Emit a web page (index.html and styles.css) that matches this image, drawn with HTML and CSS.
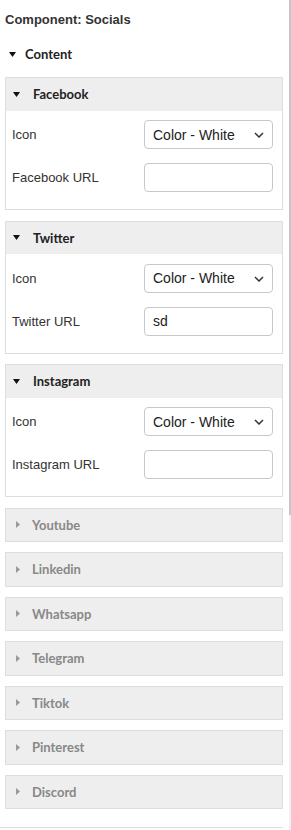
FILE: index.html
```html
<!doctype html>
<html>
  <head>
    <meta charset="UTF-8" />
    <meta name="viewport" content="width=device-width, initial-scale=1.0" />
    <title>Component: Socials</title>
    <link rel="stylesheet" href="styles.css">
  </head>
  <body>
    <div class="editor">
      <div class="editor-title">Component: Socials</div>

      <div class="group-toggle">
        <svg class="caret" width="7" height="5" viewBox="0 0 7 5"><path d="M0 0h7L3.5 5z" fill="#111"/></svg>
        <span>Content</span>
      </div>

      <div class="panel">
        <div class="panel-head">
          <svg class="caret" width="7" height="5" viewBox="0 0 7 5"><path d="M0 0h7L3.5 5z" fill="#111"/></svg>
          <span>Facebook</span>
        </div>
        <div class="panel-body">
          <div class="field">
            <label>Icon</label>
            <div class="select-wrap">
              <select><option>Color - White</option></select>
              <svg class="chevron" width="10" height="6" viewBox="0 0 10 6"><path d="M1 1l4 4 4-4" fill="none" stroke="#333" stroke-width="1.5"/></svg>
            </div>
          </div>
          <div class="field">
            <label>Facebook URL</label>
            <input type="text" value="" />
          </div>
        </div>
      </div>

      <div class="panel">
        <div class="panel-head">
          <svg class="caret" width="7" height="5" viewBox="0 0 7 5"><path d="M0 0h7L3.5 5z" fill="#111"/></svg>
          <span>Twitter</span>
        </div>
        <div class="panel-body">
          <div class="field">
            <label>Icon</label>
            <div class="select-wrap">
              <select><option>Color - White</option></select>
              <svg class="chevron" width="10" height="6" viewBox="0 0 10 6"><path d="M1 1l4 4 4-4" fill="none" stroke="#333" stroke-width="1.5"/></svg>
            </div>
          </div>
          <div class="field">
            <label>Twitter URL</label>
            <input type="text" value="sd" />
          </div>
        </div>
      </div>

      <div class="panel">
        <div class="panel-head">
          <svg class="caret" width="7" height="5" viewBox="0 0 7 5"><path d="M0 0h7L3.5 5z" fill="#111"/></svg>
          <span>Instagram</span>
        </div>
        <div class="panel-body">
          <div class="field">
            <label>Icon</label>
            <div class="select-wrap">
              <select><option>Color - White</option></select>
              <svg class="chevron" width="10" height="6" viewBox="0 0 10 6"><path d="M1 1l4 4 4-4" fill="none" stroke="#333" stroke-width="1.5"/></svg>
            </div>
          </div>
          <div class="field">
            <label>Instagram URL</label>
            <input type="text" value="" />
          </div>
        </div>
      </div>

      <div class="panel collapsed"><div class="panel-head"><svg class="caret-right" width="4" height="7" viewBox="0 0 4 7"><path d="M0 0l4 3.5L0 7z" fill="#999"/></svg><span>Youtube</span></div></div>
      <div class="panel collapsed"><div class="panel-head"><svg class="caret-right" width="4" height="7" viewBox="0 0 4 7"><path d="M0 0l4 3.5L0 7z" fill="#999"/></svg><span>Linkedin</span></div></div>
      <div class="panel collapsed"><div class="panel-head"><svg class="caret-right" width="4" height="7" viewBox="0 0 4 7"><path d="M0 0l4 3.5L0 7z" fill="#999"/></svg><span>Whatsapp</span></div></div>
      <div class="panel collapsed"><div class="panel-head"><svg class="caret-right" width="4" height="7" viewBox="0 0 4 7"><path d="M0 0l4 3.5L0 7z" fill="#999"/></svg><span>Telegram</span></div></div>
      <div class="panel collapsed"><div class="panel-head"><svg class="caret-right" width="4" height="7" viewBox="0 0 4 7"><path d="M0 0l4 3.5L0 7z" fill="#999"/></svg><span>Tiktok</span></div></div>
      <div class="panel collapsed"><div class="panel-head"><svg class="caret-right" width="4" height="7" viewBox="0 0 4 7"><path d="M0 0l4 3.5L0 7z" fill="#999"/></svg><span>Pinterest</span></div></div>
      <div class="panel collapsed"><div class="panel-head"><svg class="caret-right" width="4" height="7" viewBox="0 0 4 7"><path d="M0 0l4 3.5L0 7z" fill="#999"/></svg><span>Discord</span></div></div>

      <div class="editor-footer"></div>
    </div>

    <div class="scroll-track"><div class="scroll-thumb"></div></div>
  </body>
</html>
```

FILE: styles.css
```css
body {
  margin: 0;
  background: #fff;
  font-family: "Liberation Sans", Arial, sans-serif;
  color: #333;
  overflow: hidden;
}

.editor {
  width: 283px;
}

.editor-title {
  padding: 12px 5px 0;
  font-size: 13px;
  line-height: 16px;
  font-weight: bold;
  color: #333;
}

.group-toggle {
  display: flex;
  align-items: center;
  margin: 18px 0 15px;
  padding-left: 9px;
  height: 16px;
  font-family: Lato, sans-serif;
  font-weight: bold;
  font-size: 13px;
  color: #222;
}

.group-toggle .caret {
  margin-right: 9px;
}

.panel {
  margin: 0 0 10.5px 5px;
  border: 1px solid #ddd;
  background: #fff;
}

.panel.collapsed {
  margin-bottom: 10px;
}

.panel-head {
  display: flex;
  align-items: center;
  height: 32.5px;
  padding-left: 7px;
  background: #eee;
  font-family: Lato, sans-serif;
  font-weight: bold;
  font-size: 13px;
  color: #222;
}

.panel-head .caret {
  margin-right: 13px;
}

.panel-head .caret-right {
  margin: 0 12px 0 3px;
}

.collapsed .panel-head {
  color: #888;
}

.panel-body {
  display: flex;
  flex-direction: column;
  gap: 14px;
  padding: 9.5px 9px 17px 6px;
}

.field {
  display: grid;
  grid-template-columns: 1fr 129px;
  align-items: center;
}

.field label {
  font-size: 13px;
  color: #333;
}

.select-wrap {
  position: relative;
}

.field select,
.field input {
  box-sizing: border-box;
  width: 129px;
  height: 29px;
  margin: 0;
  padding: 0 8px;
  border: 1px solid #c8c8c8;
  border-radius: 4px;
  background: #fff;
  font-family: "Liberation Sans", Arial, sans-serif;
  font-size: 14px;
  color: #222;
  appearance: none;
  -webkit-appearance: none;
  outline: none;
}

.chevron {
  position: absolute;
  right: 9px;
  top: 12px;
  pointer-events: none;
}

.editor-footer {
  padding-top: 8px;
  border-bottom: 1px solid #ddd;
}

.scroll-track {
  position: fixed;
  top: 0;
  right: 0;
  width: 2px;
  height: 100%;
  background: #f1f1f1;
}

.scroll-thumb {
  height: 515px;
  background: #c6c6c6;
}
```
